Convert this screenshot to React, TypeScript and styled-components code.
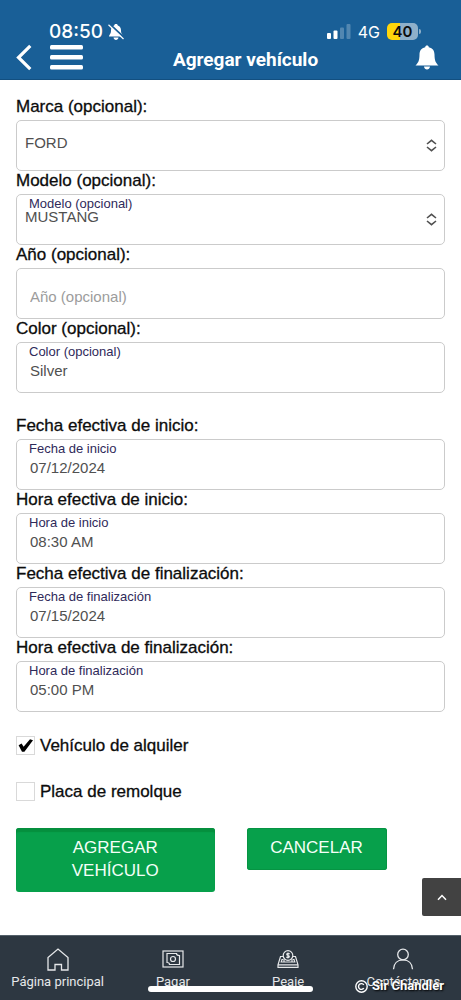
import React, { useState } from "react";
import styled, { createGlobalStyle } from "styled-components";

const GlobalStyle = createGlobalStyle`
  *, *::before, *::after { box-sizing: border-box; }
  body {
    margin: 0;
    background: #fff;
    color: #0c0c0c;
    font-family: "Liberation Sans", Arial, sans-serif;
  }
  button, input, select { font-family: inherit; margin: 0; }
`;

const Page = styled.div`
  min-height: 100vh;
  display: flex;
  flex-direction: column;
`;

const Header = styled.header`
  background: #195f97;
  border-bottom: 1px solid #124f80;
  color: #fff;
  height: 80px;
  padding: 21px 22px 0 16px;
`;

const StatusBar = styled.div`
  display: flex;
  justify-content: space-between;
  align-items: center;
  height: 21px;
  padding: 0 18px 0 33px;
  font-family: Inter, sans-serif;
`;

const StatusGroup = styled.div<{ $gap: number }>`
  display: flex;
  align-items: center;
  gap: ${(p) => p.$gap}px;
`;

const Clock = styled.span`
  font-size: 19px;
  line-height: 20px;
  font-weight: 500;
`;

const Network = styled.span`
  font-size: 16px;
  line-height: 20px;
  font-weight: 400;
`;

const Battery = styled.span`
  display: flex;
  align-items: center;
  gap: 1px;

  &::after {
    content: "";
    width: 2px;
    height: 5px;
    border-radius: 0 2px 2px 0;
    background: #8fb0ca;
  }
`;

const BatteryLevel = styled.span`
  width: 31px;
  height: 17px;
  border-radius: 5px;
  background: linear-gradient(90deg, #ffd60a 42%, #8fb0ca 42%);
  color: #0c0c0c;
  font-size: 15px;
  line-height: 17px;
  font-weight: 600;
  text-align: center;
`;

const HeaderRow = styled.div`
  display: grid;
  grid-template-columns: 68px 1fr 24px;
  align-items: center;
  height: 30px;
`;

const HeaderActions = styled.div`
  display: flex;
  align-items: center;
  gap: 18px;
`;

const IconButton = styled.button`
  display: flex;
  padding: 0;
  border: 0;
  background: none;
  color: inherit;
  cursor: pointer;
`;

const Title = styled.h1`
  margin: 6px 0 0;
  padding-right: 8px;
  font-family: Roboto, sans-serif;
  font-size: 19px;
  line-height: 24px;
  font-weight: 700;
  text-align: center;
`;

const Form = styled.form`
  padding: 16px 16px 110px;
`;

const FieldGroup = styled.div<{ $spaced?: boolean }>`
  margin-top: ${(p) => (p.$spaced ? 23 : 0)}px;
`;

const mediumText = `
  font-size: 17px;
  -webkit-text-stroke: 0.3px currentColor;
`;

const FieldLabel = styled.label`
  display: block;
  height: 24px;
  line-height: 22px;
  ${mediumText}
`;

const Control = styled.div`
  position: relative;
  height: 50px;
`;

const FloatingLabel = styled.label`
  position: absolute;
  left: 13px;
  top: 2px;
  color: #2f2a5a;
  font-size: 13px;
  line-height: 16px;
`;

const controlBox = `
  display: block;
  width: 100%;
  height: 51px;
  border: 1px solid #cbcbcb;
  border-radius: 5px;
  background: #fff;
  color: #505050;
  font-size: 15px;
  outline: none;
`;

const TextInput = styled.input`
  ${controlBox}
  padding: 6px 13px 0;

  &::placeholder { color: #9c9c9c; opacity: 1; }
`;

const Select = styled.select`
  ${controlBox}
  appearance: none;
  padding: 0 32px 7px 8px;
`;

const SelectArrows = styled.svg`
  position: absolute;
  right: 8px;
  top: 19px;
  pointer-events: none;
`;

const CheckList = styled.div`
  display: flex;
  flex-direction: column;
  gap: 27px;
  margin-top: 25px;
`;

const CheckLabel = styled.label`
  display: flex;
  align-items: center;
  gap: 5px;
  height: 19px;
  line-height: 19px;
  ${mediumText}
`;

const CheckWrap = styled.span`
  position: relative;
  display: flex;

  svg {
    position: absolute;
    inset: 0;
    pointer-events: none;
    visibility: hidden;
  }

  input:checked + svg { visibility: visible; }
`;

const Checkbox = styled.input`
  appearance: none;
  width: 19px;
  height: 19px;
  border: 1px solid #d9d9d9;
  background: #fff;
`;

const Actions = styled.div`
  display: grid;
  grid-template-columns: 1fr 1fr;
  align-items: start;
  justify-items: start;
  column-gap: 32px;
  margin-top: 27px;
`;

const ActionButton = styled.button<{ $primary?: boolean }>`
  width: ${(p) => (p.$primary ? "100%" : "140px")};
  padding: ${(p) => (p.$primary ? "8px 40px 10px" : "8px 16px 11px")};
  border: 0;
  border-radius: 3px;
  background: #07a04b;
  box-shadow: ${(p) => (p.$primary ? "inset 0 4px 1px #058f3e" : "inset 0 0 0 1px #069443")};
  color: #f4fff8;
  font-size: 17px;
  line-height: 23px;
  text-transform: uppercase;
  cursor: pointer;
`;

const ToTop = styled.button`
  position: fixed;
  right: 0;
  bottom: 84px;
  display: flex;
  align-items: center;
  justify-content: center;
  width: 39px;
  height: 38px;
  padding: 0;
  border: 0;
  border-radius: 2px 0 0 2px;
  background: #424242;
  color: #fff;
`;

const TabBar = styled.nav`
  position: fixed;
  left: 0;
  right: 0;
  bottom: 0;
  display: grid;
  grid-template-columns: repeat(4, 1fr);
  height: 65px;
  border-top: 1px solid #54606a;
  background: #2d3741;
`;

const Tab = styled.a`
  display: flex;
  flex-direction: column;
  align-items: center;
  gap: 2px;
  padding-top: 12px;
  color: #e6e8ea;
  font-family: Roboto, sans-serif;
  font-size: 13px;
  line-height: 16px;
  text-decoration: none;
  white-space: nowrap;
`;

const HomeIndicator = styled.div`
  position: absolute;
  left: 50%;
  bottom: 8px;
  width: 36%;
  height: 6px;
  border-radius: 3px;
  background: #fff;
  transform: translateX(-50%);
`;

const Credit = styled.span`
  position: absolute;
  right: 17px;
  bottom: 5px;
  display: flex;
  align-items: center;
  gap: 4px;
  color: #fff;
  font-family: Roboto, sans-serif;
  font-size: 13px;
  line-height: 18px;
  font-weight: 700;
  text-shadow: 1px 1px 2px #000;
  white-space: nowrap;
`;

type FieldProps = {
  id: string;
  label: string;
  floating?: string;
  spaced?: boolean;
  children: React.ReactNode;
};

const Field = ({ id, label, floating, spaced, children }: FieldProps) => (
  <FieldGroup $spaced={spaced}>
    <FieldLabel htmlFor={id}>{label}</FieldLabel>
    <Control>
      {children}
      {floating && <FloatingLabel htmlFor={id}>{floating}</FloatingLabel>}
    </Control>
  </FieldGroup>
);

const Arrows = () => (
  <SelectArrows width="11" height="13" viewBox="0 0 11 13" fill="none" stroke="#505050" strokeWidth="1.6" aria-hidden="true">
    <path d="M1 5 5.500 1.300 10 5M1 8 5.500 11.700 10 8" />
  </SelectArrows>
);

type CheckProps = { label: string; initial: boolean };

const Check = ({ label, initial }: CheckProps) => {
  const [checked, setChecked] = useState(initial);
  return (
    <CheckLabel>
      <CheckWrap>
        <Checkbox type="checkbox" checked={checked} onChange={() => setChecked(!checked)} />
        <svg width="19" height="19" viewBox="0 0 19 19" aria-hidden="true">
          <path d="M2.600 9.200 5.600 7.600 7.600 10.800 14 3.200 17 4.200 8.400 15.800 6 15.800Z" fill="#000" />
        </svg>
      </CheckWrap>
      {label}
    </CheckLabel>
  );
};

const HomeIcon = () => (
  <svg width="24" height="24" viewBox="0 0 24 24" fill="none" stroke="currentColor" strokeWidth="1.300" aria-hidden="true">
    <path d="M2 22V9.500L12 1 22 9.500V22H15.500V16.500H9V22Z" />
  </svg>
);

const PayIcon = () => (
  <svg width="24" height="24" viewBox="0 0 24 24" fill="none" stroke="currentColor" strokeWidth="1.200" aria-hidden="true">
    <rect x="2" y="3" width="20" height="16" />
    <path d="M6 5.500H15.500Q15.500 7.500 18.500 7.500V16.500H8.500Q8.500 14.500 6 14.500Z" />
    <circle cx="12" cy="11" r="2.500" />
  </svg>
);

const TollIcon = () => (
  <svg width="24" height="24" viewBox="0 0 24 24" fill="none" stroke="currentColor" strokeWidth="1.200" aria-hidden="true">
    <path d="M7 8.500H4.500L2 16.800V19.300H22V16.800L19.500 8.500H17M2 16.800H22M7 11.500H6L5.200 14H18.800L18 11.500H17M8 11V14M16 11V14" />
    <circle cx="12" cy="7.500" r="4.800" />
    <path d="M13.700 6Q12 4.800 10.800 6 10.500 7.200 12 7.500 13.700 7.900 13.200 9 12 10.200 10.300 9M12 4.500V10.500" />
  </svg>
);

const PersonIcon = () => (
  <svg width="24" height="24" viewBox="0 0 24 24" fill="none" stroke="currentColor" strokeWidth="1.300" aria-hidden="true">
    <circle cx="12" cy="6.500" r="5.300" />
    <path d="M2.500 21.300C2.700 15.300 6.500 11.900 12 11.900S21.300 15.300 21.500 21.300" />
  </svg>
);

const tabs = [
  { label: "Página principal", Icon: HomeIcon },
  { label: "Pagar", Icon: PayIcon },
  { label: "Peaje", Icon: TollIcon },
  { label: "Contáctenos", Icon: PersonIcon },
];

export default function App() {
  return (
    <Page>
      <GlobalStyle />
      <Header>
        <StatusBar>
          <StatusGroup $gap={4}>
            <Clock>08:50</Clock>
            <svg width="18" height="18" viewBox="0 0 18 18" aria-hidden="true">
              <path d="M9 1C7.800 1 7.200 1.700 7.200 2.500 4.800 3.200 4 5.200 4 7.500 4 11 2.200 11.500 2 13.500H16C15.800 11.500 14 11 14 7.500 14 5.200 13.200 3.200 10.800 2.500 10.800 1.700 10.200 1 9 1ZM6.500 14.500C6.800 17.800 11.200 17.800 11.500 14.500Z" fill="#fff" />
              <path d="M2.500 1 17.500 15" stroke="#195f97" strokeWidth="2" />
              <path d="M1.500 1.800 16.500 16" stroke="#fff" strokeWidth="1.200" />
            </svg>
          </StatusGroup>
          <StatusGroup $gap={7}>
            <svg width="24" height="15" viewBox="0 0 24 15" fill="#fff" aria-hidden="true">
              <rect x="0" y="9" width="4" height="6" rx="1" />
              <rect x="6.500" y="6.500" width="4" height="8.500" rx="1" />
              <rect x="13" y="3.500" width="4" height="11.500" rx="1" opacity=".25" />
              <rect x="19.500" y="0" width="4" height="15" rx="1" opacity=".25" />
            </svg>
            <Network>4G</Network>
            <Battery>
              <BatteryLevel>40</BatteryLevel>
            </Battery>
          </StatusGroup>
        </StatusBar>
        <HeaderRow>
          <HeaderActions>
            <IconButton type="button" aria-label="Volver">
              <svg width="16" height="27" viewBox="0 0 16 27" fill="none" stroke="#fff" strokeWidth="3.200" aria-hidden="true">
                <path d="M14.300 1.800 2.500 13.500 14.300 25.200" />
              </svg>
            </IconButton>
            <IconButton type="button" aria-label="Menú">
              <svg width="33" height="25" viewBox="0 0 33 25" fill="#fff" aria-hidden="true">
                <rect width="33" height="4.500" rx="1.500" />
                <rect y="10" width="33" height="4.500" rx="1.500" />
                <rect y="20" width="33" height="4.500" rx="1.500" />
              </svg>
            </IconButton>
          </HeaderActions>
          <Title>Agregar vehículo</Title>
          <IconButton type="button" aria-label="Notificaciones">
            <svg width="24" height="25" viewBox="0 0 24 25" fill="#fff" aria-hidden="true">
              <path d="M12 .5C10.900 .5 10.300 1.200 10.200 2.200 6.200 3 4.600 5.800 4.500 9.500 4.400 15.500 3.500 17.500 .5 20.500H23.500C20.500 17.500 19.600 15.500 19.500 9.500 19.400 5.800 17.800 3 13.800 2.200 13.700 1.200 13.100 .5 12 .5ZM9 21.500H15C14.700 25.500 9.300 25.500 9 21.500Z" />
            </svg>
          </IconButton>
        </HeaderRow>
      </Header>

      <Form onSubmit={(e) => e.preventDefault()}>
        <Field id="marca" label="Marca (opcional):">
          <Select id="marca" defaultValue="FORD">
            <option>FORD</option>
          </Select>
          <Arrows />
        </Field>
        <Field id="modelo" label="Modelo (opcional):" floating="Modelo (opcional)">
          <Select id="modelo" defaultValue="MUSTANG">
            <option>MUSTANG</option>
          </Select>
          <Arrows />
        </Field>
        <Field id="anio" label="Año (opcional):">
          <TextInput id="anio" placeholder="Año (opcional)" />
        </Field>
        <Field id="color" label="Color (opcional):" floating="Color (opcional)">
          <TextInput id="color" defaultValue="Silver" />
        </Field>
        <Field id="fecha-inicio" label="Fecha efectiva de inicio:" floating="Fecha de inicio" spaced>
          <TextInput id="fecha-inicio" defaultValue="07/12/2024" />
        </Field>
        <Field id="hora-inicio" label="Hora efectiva de inicio:" floating="Hora de inicio">
          <TextInput id="hora-inicio" defaultValue="08:30 AM" />
        </Field>
        <Field id="fecha-fin" label="Fecha efectiva de finalización:" floating="Fecha de finalización">
          <TextInput id="fecha-fin" defaultValue="07/15/2024" />
        </Field>
        <Field id="hora-fin" label="Hora efectiva de finalización:" floating="Hora de finalización">
          <TextInput id="hora-fin" defaultValue="05:00 PM" />
        </Field>

        <CheckList>
          <Check label="Vehículo de alquiler" initial />
          <Check label="Placa de remolque" initial={false} />
        </CheckList>

        <Actions>
          <ActionButton type="submit" $primary>
            Agregar vehículo
          </ActionButton>
          <ActionButton type="button">Cancelar</ActionButton>
        </Actions>
      </Form>

      <ToTop type="button" aria-label="Subir">
        <svg width="10" height="7" viewBox="0 0 10 7" fill="none" stroke="currentColor" strokeWidth="1.500" aria-hidden="true">
          <path d="M1 5.800 5 1.500 9 5.800" />
        </svg>
      </ToTop>

      <TabBar>
        {tabs.map(({ label, Icon }) => (
          <Tab href="#" key={label}>
            <Icon />
            {label}
          </Tab>
        ))}
        <HomeIndicator />
        <Credit>
          <svg width="13" height="13" viewBox="0 0 13 13" fill="none" stroke="#fff" strokeWidth="1.400" aria-hidden="true">
            <circle cx="6.500" cy="6.500" r="5.700" />
            <path d="M8.800 4.800A2.900 2.900 0 1 0 8.800 8.200" />
          </svg>
          Sir Chandler
        </Credit>
      </TabBar>
    </Page>
  );
}
